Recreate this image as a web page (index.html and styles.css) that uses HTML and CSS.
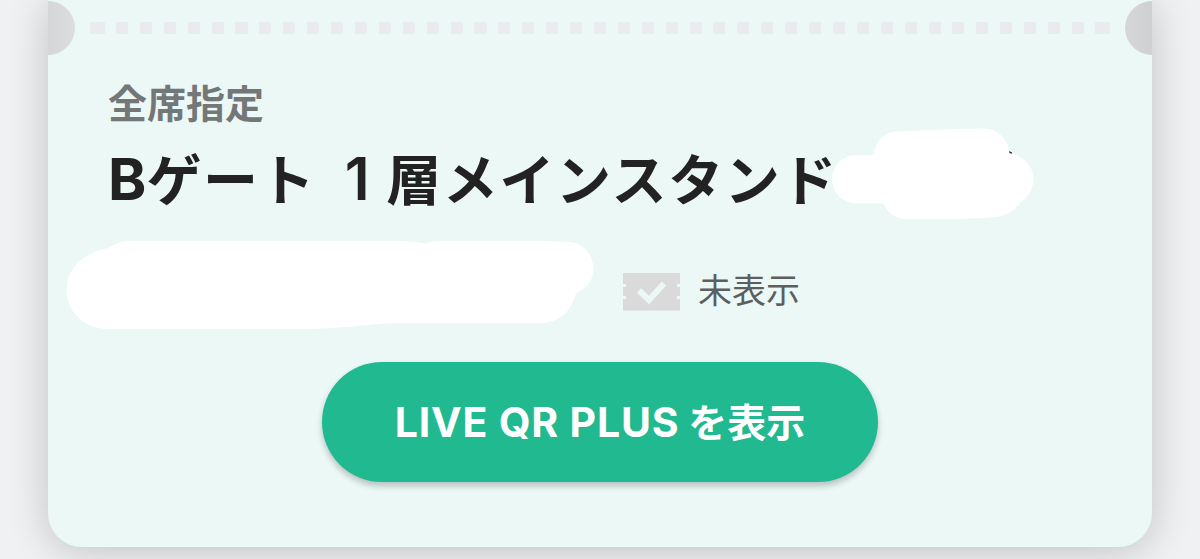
FILE: index.html
```html
<!DOCTYPE html>
<html lang="ja">
<head>
    <meta charset="UTF-8">
    <meta name="viewport" content="width=device-width, initial-scale=1.0">
    <title>チケット</title>
    <link rel="stylesheet" href="styles.css">
</head>
<body>
    <div class="ticket">
        <span class="notch notch-left"></span>
        <span class="notch notch-right"></span>

        <div class="perforation">
            <span class="dash-end"></span>
            <span class="dashes"></span>
            <span class="dash-end"></span>
        </div>

        <div class="seat">
            <p class="seat-type">全席指定</p>
            <h2 class="seat-name"><span class="latin">B</span>ゲート<span class="space"> </span><span class="floor">1</span>層メインスタンド</h2>
            <svg class="seat-mask" width="206" height="96" viewBox="830 125 206 96">
                <path d="M1009 151l3 1.500v2.500h-3z" fill="#222"/>
                <path d="M857 155H874C875 142 883 132 897 131.500C925 130.500 955 128.500 985 128.500C998 129 1008 139 1009.500 153C1023 156 1033.500 166 1033.500 179C1033.500 190 1027 198 1021 202C1014 212 1004 217 990 217.500C965 219.500 930 219 905 219C895 219 887 212 883.500 203.500H857C843 203 832 193 832 179.500C832 166 843 155 857 155Z" fill="#fff"/>
            </svg>
        </div>

        <div class="status-row">
            <svg class="holder-mask" width="528" height="90" viewBox="66 240 528 90">
                <path d="M128 241H395C408 241 419 242 426 243.500C431 241 438 241 448 241H540C550 241 561 242 568 242C583 242 593.500 255 593.500 269C593.500 280 587 289 576 293C572 310 560 323 540 323H395C365 324 345 329 300 329H108C84 329 66.500 311 66.500 290C66.500 268 83 253 108 248C115 244 120 241 128 241Z" fill="#fff"/>
            </svg>
            <div class="status">
                <svg class="ticket-icon" width="57" height="38" viewBox="0 0 57 38">
                    <path d="M0 0H57V11H54V14H57V23H54V26H57V37.500H0V26H3V23H0V14H3V11H0Z" fill="#dadada"/>
                    <path d="M16 17.500L26 27L41 10.500" fill="none" stroke="#ebf8f6" stroke-width="6"/>
                </svg>
                <span class="status-text">未表示</span>
            </div>
        </div>

        <button class="show-button"><span class="latin">LIVE QR PLUS</span> を表示</button>
    </div>
</body>
</html>
```
FILE: styles.css
```css
* {
    box-sizing: border-box;
}

body {
    font-family: 'Noto Sans CJK JP', sans-serif;
    margin: 0;
    padding: 0 48px;
    height: 559px;
    overflow: hidden;
    background-color: #f0f1f3;
}

.ticket {
    position: relative;
    height: 547px;
    padding-top: 22px;
    background-color: #ebf8f6;
    border-radius: 0 0 34px 34px;
    box-shadow: 0 4px 40px rgba(0, 0, 0, 0.2);
}

.notch {
    position: absolute;
    top: 1px;
    width: 27px;
    height: 54px;
}

.notch-left {
    left: 0;
    border-radius: 0 27px 27px 0;
    background: linear-gradient(90deg, #d5d6d8, #dcdddf);
}

.notch-right {
    right: 0;
    border-radius: 27px 0 0 27px;
    background: linear-gradient(90deg, #d5d6d8, #cfd0d2);
}

.perforation {
    display: flex;
    justify-content: space-between;
    height: 12px;
    padding: 0 42px;
}

.dash-end {
    width: 15px;
    background-color: #e9ebee;
}

.dashes {
    width: 968px;
    background: repeating-linear-gradient(90deg, #e9ebee 0, #e9ebee 12px, transparent 12px, transparent 23.9px);
}

.seat {
    position: relative;
    padding: 44px 60px 0;
}

.seat-type {
    margin: 0;
    font-size: 39px;
    line-height: 46px;
    font-weight: bold;
    color: #747777;
}

.seat-name {
    margin: 17px 0 0;
    font-size: 55px;
    line-height: 70px;
    letter-spacing: 1.6px;
    font-weight: bold;
    color: #222;
    white-space: nowrap;
}

.latin {
    font-family: Inter, 'Liberation Sans', sans-serif;
}

.seat-name .latin {
    font-size: 58px;
    letter-spacing: 0;
}

.space {
    font-size: 46px;
}

.floor {
    display: inline-block;
    width: 58px;
    font-family: Inter, 'Liberation Sans', sans-serif;
    font-size: 59px;
    font-weight: 600;
    letter-spacing: 0;
    text-align: center;
}

.seat-mask {
    position: absolute;
    left: 782px;
    top: 91px;
}

.status-row {
    display: flex;
    margin-top: 25px;
    padding-left: 18px;
}

.holder-mask {
    flex: none;
}

.status {
    display: flex;
    align-items: flex-start;
    padding: 33px 0 0 29px;
}

.status-text {
    margin: -9px 0 0 18px;
    font-size: 34px;
    line-height: 50px;
    color: #5c5f5f;
}

.show-button {
    display: block;
    width: 556px;
    height: 120px;
    margin: 32px auto 0;
    padding: 0 0 4px;
    font-family: 'Noto Sans CJK JP', sans-serif;
    font-size: 39px;
    font-weight: bold;
    color: #fff;
    background-color: #20b990;
    border: none;
    border-radius: 60px;
    box-shadow: 0 4px 6px rgba(0, 0, 0, 0.22);
    cursor: pointer;
}

.show-button .latin {
    font-size: 41px;
    letter-spacing: 0.8px;
}
```
